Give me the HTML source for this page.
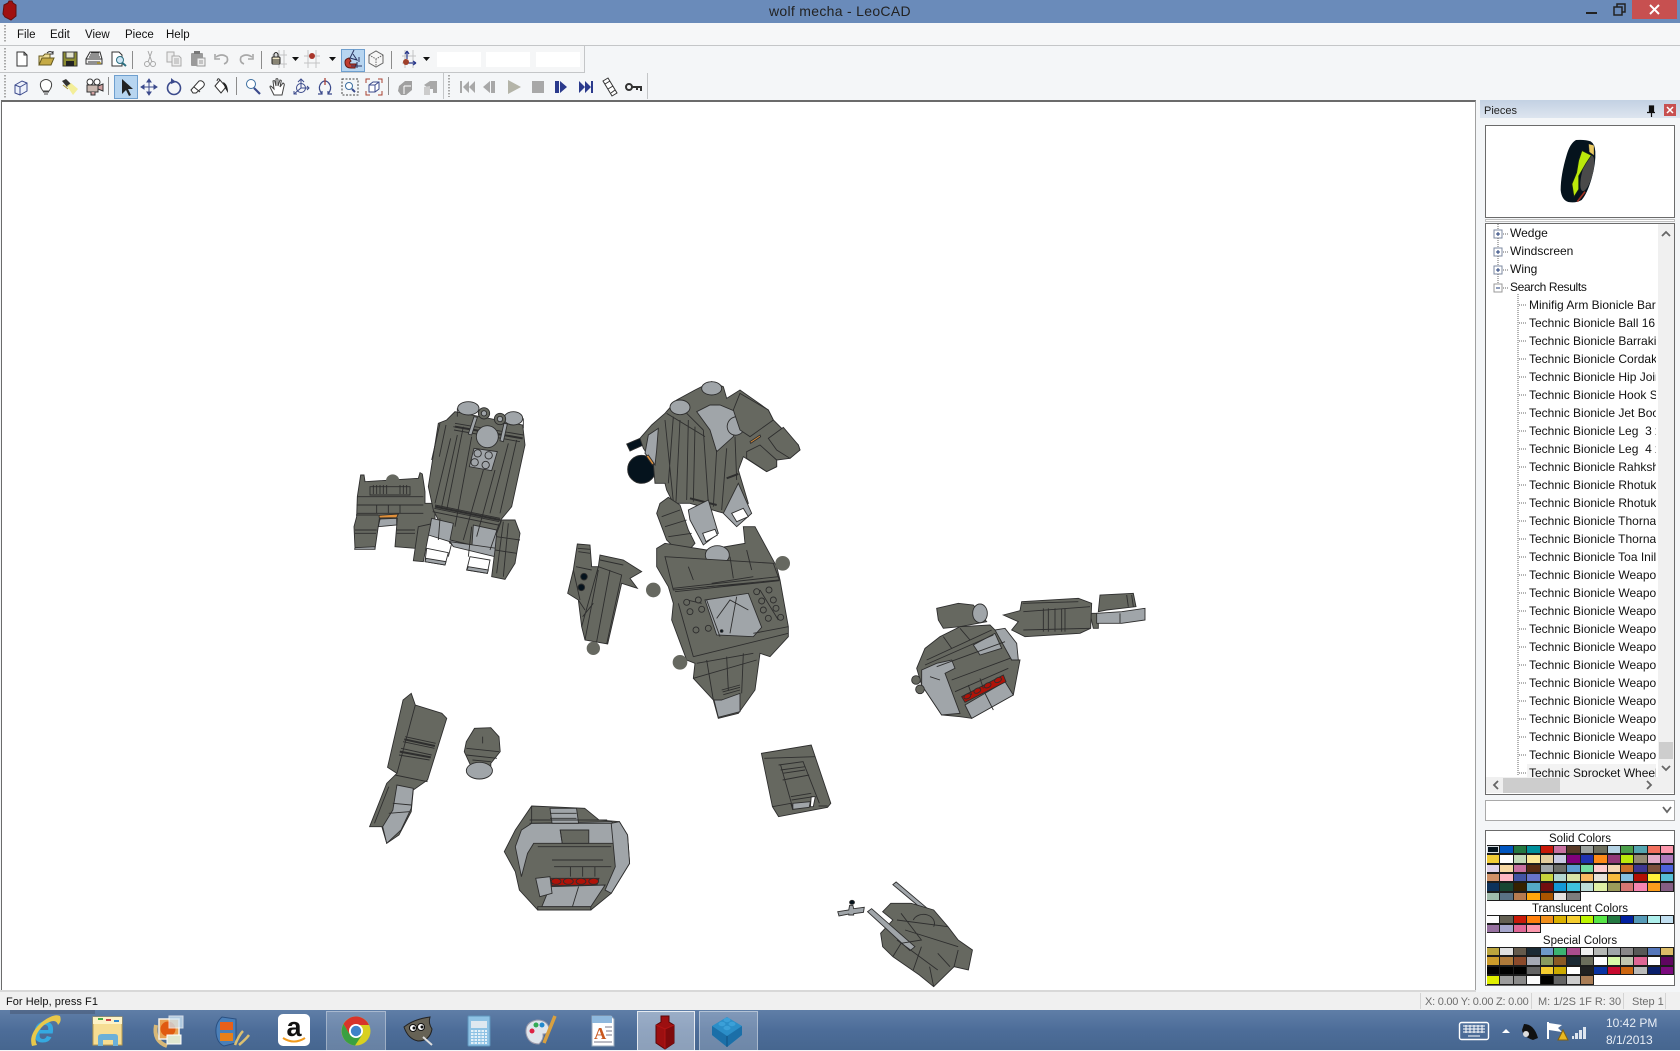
<!DOCTYPE html>
<html><head><meta charset="utf-8"><title>wolf mecha - LeoCAD</title>
<style>
html,body{margin:0;padding:0;width:1680px;height:1050px;overflow:hidden;background:#f4f6f8;font-family:"Liberation Sans",sans-serif;font-size:12px;color:#111}
.a{position:absolute}
.t{position:absolute;white-space:nowrap;line-height:16px}
svg{position:absolute;left:0;top:0;overflow:visible}
.sw{position:absolute;left:1487px;width:188px;display:grid;grid-template-columns:repeat(14,13.4px)}
.sw i{display:block;box-sizing:border-box;border-right:1px solid #1c1c1c;border-bottom:1px solid #1c1c1c;border-top:1px solid #1c1c1c}
.r .d,.r .l,.r .k,.r .w,.r .o,.r .e,.r path{vector-effect:non-scaling-stroke;stroke:#2e2e2e;stroke-width:.9}
.r .d{fill:#666860}.r .l{fill:#a0a5a9}.r .k{fill:#05131d}.r .w{fill:#fff}.r .o{fill:#e0903a}.r .e{fill:#b01208}
.r path{fill:none}
.r .s{fill:#666860;stroke:none}
.r .h{stroke-width:2}
.tr{position:absolute;left:1529px;width:127px;height:18px;line-height:18px;overflow:hidden;white-space:nowrap}
.m{font-size:11.5px}
.ct{position:absolute;left:1475px;width:210px;text-align:center;line-height:14px;font-size:11.5px;white-space:nowrap}
</style></head><body>
<div class="a" style="left:0;top:0;width:1680px;height:23px;background:#6a8bba"></div>
<div class="a" style="left:1632px;top:0;width:45px;height:19px;background:#c75050"></div>
<div class="t" style="left:769px;top:3px;font-size:14px;letter-spacing:.3px;color:#222;line-height:17px">wolf mecha - LeoCAD</div>
<div class="a" style="left:0;top:23px;width:1680px;height:22px;background:#f6f7f8;border-bottom:1px solid #c4c6c8"></div>
<div class="t m" style="left:17px;top:27px">File</div>
<div class="t m" style="left:50px;top:27px">Edit</div>
<div class="t m" style="left:85px;top:27px">View</div>
<div class="t m" style="left:125px;top:27px">Piece</div>
<div class="t m" style="left:166px;top:27px">Help</div>
<div class="a" style="left:0;top:46px;width:584px;height:26px;background:#f5f6f7;border-right:1px solid #c4c6c8;border-bottom:1px solid #c4c6c8"></div>
<div class="a" style="left:437px;top:52px;width:44px;height:15px;background:#fff"></div>
<div class="a" style="left:486px;top:52px;width:44px;height:15px;background:#fff"></div>
<div class="a" style="left:536px;top:52px;width:44px;height:15px;background:#fff"></div>
<div class="a" style="left:443px;top:73px;width:1px;height:26px;background:#c4c6c8"></div>
<div class="a" style="left:647px;top:73px;width:1px;height:26px;background:#c4c6c8"></div>
<div class="a" style="left:341px;top:49px;width:22px;height:21px;background:#b7d5f0;border:1px solid #6e9fcf"></div>
<div class="a" style="left:114px;top:75px;width:22px;height:22px;background:#b7d5f0;border:1px solid #6e9fcf"></div>
<!-- canvas -->
<div class="a" style="left:1px;top:100px;width:1473px;height:889px;background:#fff;border-top:2px solid #6b6b6b;border-left:1px solid #6b6b6b;border-right:1px solid #a0a0a0;box-sizing:content-box"></div>
<div class="a" style="left:0;top:990px;width:1476px;height:2px;background:#d8d8d8"></div>
<!-- pieces panel -->
<div class="a" style="left:1480px;top:100px;width:200px;height:18px;background:linear-gradient(#c3d1e3,#dde5ef)"></div>
<div class="t" style="left:1484px;top:103px;color:#222;font-size:11px">Pieces</div>
<div class="a" style="left:1664px;top:104px;width:12px;height:12px;background:#c75050"></div>
<div class="a" style="left:1485px;top:125px;width:188px;height:91px;background:#fff;border:1px solid #6b6b6b"></div>
<div class="a" style="left:1485px;top:219px;width:188px;height:1px;border:1px solid #c0c0c0;background:#fff"></div>
<div class="a" style="left:1485px;top:223px;width:188px;height:570px;background:#fff;border:1px solid #6b6b6b;overflow:hidden"></div>
<div class="a" style="left:1658px;top:224px;width:16px;height:553px;background:#f0f0f0"></div>
<div class="a" style="left:1659px;top:742px;width:14px;height:17px;background:#cdcdcd"></div>
<div class="a" style="left:1486px;top:777px;width:188px;height:16px;background:#f0f0f0"></div>
<div class="a" style="left:1503px;top:778px;width:57px;height:15px;background:#cdcdcd"></div>
<div class="a" style="left:1485px;top:800px;width:188px;height:19px;background:#fff;border:1px solid #a9a9a9"></div>
<div class="a" style="left:1485px;top:830px;width:188px;height:154px;background:#fff;border:1px solid #6b6b6b"></div>
<div class="t" style="left:1510px;top:225px">Wedge</div>
<div class="t" style="left:1510px;top:243px">Windscreen</div>
<div class="t" style="left:1510px;top:261px">Wing</div>
<div class="t" style="left:1510px;top:279px;letter-spacing:-.35px">Search Results</div>
<div class="a" style="left:1527px;top:764px;width:129px;height:13px;background:#f3f3f3"></div>
<div class="a" style="left:1486px;top:224px;width:172px;height:553px;overflow:hidden">
<div style="position:absolute;left:-1486px;top:-224px;width:1680px;height:1050px">
<div class="tr" style="top:296px">Minifig Arm Bionicle Bar</div>
<div class="tr" style="top:314px">Technic Bionicle Ball 16.</div>
<div class="tr" style="top:332px">Technic Bionicle Barraki</div>
<div class="tr" style="top:350px">Technic Bionicle Cordak</div>
<div class="tr" style="top:368px">Technic Bionicle Hip Joint</div>
<div class="tr" style="top:386px">Technic Bionicle Hook S</div>
<div class="tr" style="top:404px">Technic Bionicle Jet Boo</div>
<div class="tr" style="top:422px">Technic Bionicle Leg&nbsp; 3 x</div>
<div class="tr" style="top:440px">Technic Bionicle Leg&nbsp; 4 x</div>
<div class="tr" style="top:458px">Technic Bionicle Rahksh</div>
<div class="tr" style="top:476px">Technic Bionicle Rhotuk</div>
<div class="tr" style="top:494px">Technic Bionicle Rhotuk</div>
<div class="tr" style="top:512px">Technic Bionicle Thorna</div>
<div class="tr" style="top:530px">Technic Bionicle Thorna</div>
<div class="tr" style="top:548px">Technic Bionicle Toa Inil</div>
<div class="tr" style="top:566px">Technic Bionicle Weapo</div>
<div class="tr" style="top:584px">Technic Bionicle Weapo</div>
<div class="tr" style="top:602px">Technic Bionicle Weapo</div>
<div class="tr" style="top:620px">Technic Bionicle Weapo</div>
<div class="tr" style="top:638px">Technic Bionicle Weapo</div>
<div class="tr" style="top:656px">Technic Bionicle Weapo</div>
<div class="tr" style="top:674px">Technic Bionicle Weapo</div>
<div class="tr" style="top:692px">Technic Bionicle Weapo</div>
<div class="tr" style="top:710px">Technic Bionicle Weapo</div>
<div class="tr" style="top:728px">Technic Bionicle Weapo</div>
<div class="tr" style="top:746px">Technic Bionicle Weapo</div>
<div class="tr" style="top:764px">Technic Sprocket Wheel</div>
</div></div>
<div class="ct" style="top:832px">Solid Colors</div>
<div class="ct" style="top:902px">Translucent Colors</div>
<div class="ct" style="top:934px">Special Colors</div>
<div class="sw" style="top:845px;grid-auto-rows:9.33px">
<i style="background:#05131d;box-shadow:inset 0 0 0 1px #d8e0e6"></i><i style="background:#0055bf"></i><i style="background:#237841"></i><i style="background:#008f9b"></i><i style="background:#c91a09"></i><i style="background:#c870a0"></i><i style="background:#583927"></i><i style="background:#9ba19d"></i><i style="background:#6d6e5c"></i><i style="background:#b4d2e3"></i><i style="background:#4b9f4a"></i><i style="background:#55a5af"></i><i style="background:#f2705e"></i><i style="background:#fc97ac"></i>
<i style="background:#f2cd37"></i><i style="background:#fff"></i><i style="background:#c2dab8"></i><i style="background:#fbe696"></i><i style="background:#e4cd9e"></i><i style="background:#c9cae2"></i><i style="background:#81007b"></i><i style="background:#2032b0"></i><i style="background:#fe8a18"></i><i style="background:#923978"></i><i style="background:#bbe90b"></i><i style="background:#958a73"></i><i style="background:#e4adc8"></i><i style="background:#ac78ba"></i>
<i style="background:#e1d5ed"></i><i style="background:#f6d7a3"></i><i style="background:#c870a0"></i><i style="background:#582a12"></i><i style="background:#a0a5a9"></i><i style="background:#6c6e68"></i><i style="background:#5c9dd1"></i><i style="background:#73dca1"></i><i style="background:#fecccf"></i><i style="background:#f6d7b3"></i><i style="background:#cc702a"></i><i style="background:#3f3691"></i><i style="background:#7c503a"></i><i style="background:#4c61db"></i>
<i style="background:#d09168"></i><i style="background:#feb6c2"></i><i style="background:#4354a3"></i><i style="background:#6874ca"></i><i style="background:#c7d23c"></i><i style="background:#b3d7d1"></i><i style="background:#d9e4a7"></i><i style="background:#f9ba61"></i><i style="background:#e6e3da"></i><i style="background:#f8bb3d"></i><i style="background:#86c1e1"></i><i style="background:#b31004"></i><i style="background:#fff03a"></i><i style="background:#56bed6"></i>
<i style="background:#0d325b"></i><i style="background:#184632"></i><i style="background:#352100"></i><i style="background:#54a9c8"></i><i style="background:#720e0f"></i><i style="background:#1498d7"></i><i style="background:#3ec2dd"></i><i style="background:#bddcd8"></i><i style="background:#dfeea5"></i><i style="background:#9b9a5a"></i><i style="background:#d67572"></i><i style="background:#f785b1"></i><i style="background:#fa9c1c"></i><i style="background:#845e84"></i>
<i style="background:#a0bcac"></i><i style="background:#597184"></i><i style="background:#b67b50"></i><i style="background:#ffa70b"></i><i style="background:#a95500"></i><i style="background:#e6e3e0"></i><i style="background:#7d7d7d"></i>
</div>
<div class="sw" style="top:915px;grid-auto-rows:9.2px">
<i style="background:#fcfcfc"></i><i style="background:#635f52"></i><i style="background:#c91a09"></i><i style="background:#ff800d"></i><i style="background:#f08f1c"></i><i style="background:#dab000"></i><i style="background:#f5cd2f"></i><i style="background:#bdf400"></i><i style="background:#56e646"></i><i style="background:#237841"></i><i style="background:#0020a0"></i><i style="background:#559ab7"></i><i style="background:#aeefec"></i><i style="background:#c1dff0"></i>
<i style="background:#96709f"></i><i style="background:#a5a5cb"></i><i style="background:#df6695"></i><i style="background:#fc97ac"></i>
</div>
<div class="sw" style="top:946.5px;grid-auto-rows:9.55px">
<i style="background:#bba53d"></i><i style="background:#e0e0e0"></i><i style="background:#645a4c"></i><i style="background:#1b2a34"></i><i style="background:#6e99c9"></i><i style="background:#3cb371"></i><i style="background:#aa4d8e"></i><i style="background:#f0f0f0"></i><i style="background:#b5b8b5"></i><i style="background:#a0a5a9"></i><i style="background:#898788"></i><i style="background:#575857"></i><i style="background:#5677ba"></i><i style="background:#dcbc68"></i>
<i style="background:#cc9c2b"></i><i style="background:#ae7a3a"></i><i style="background:#8b4a2b"></i><i style="background:#a5a9b4"></i><i style="background:#899b5f"></i><i style="background:#8a5a25"></i><i style="background:#1b2a34"></i><i style="background:#6c6e5c"></i><i style="background:#fff"></i><i style="background:#d9f9a8"></i><i style="background:#c0c7b0"></i><i style="background:#df6695"></i><i style="background:#fff"></i><i style="background:#5f0560"></i>
<i style="background:#000"></i><i style="background:#000"></i><i style="background:#000"></i><i style="background:#646464"></i><i style="background:#f5cd2f"></i><i style="background:#ccaa00"></i><i style="background:#fff"></i><i style="background:#212121"></i><i style="background:#0a34a3"></i><i style="background:#c70a2e"></i><i style="background:#cc6611"></i><i style="background:#bbb"></i><i style="background:#0a1f6b"></i><i style="background:#7a0a7d"></i>
<i style="background:#dfee00"></i><i style="background:#9c9c9c"></i><i style="background:#8a8a8a"></i><i style="background:#fbfbfb"></i><i style="background:#000"></i><i style="background:#646464"></i><i style="background:#ccc"></i><i style="background:#aa7d55"></i>
</div>
<!-- status -->
<div class="a" style="left:0;top:992px;width:1680px;height:18px;background:#f0f0f0"></div>
<div class="t" style="left:6px;top:994px;font-size:11px;letter-spacing:.05px">For Help, press F1</div>
<div class="t" style="left:1425px;top:994px;color:#6d6d6d;font-size:11px;letter-spacing:-.25px">X: 0.00 Y: 0.00 Z: 0.00</div>
<div class="t" style="left:1538px;top:994px;color:#6d6d6d;font-size:11px">M: 1/2S 1F R: 30</div>
<div class="t" style="left:1632px;top:994px;color:#6d6d6d;font-size:11px">Step 1</div>
<div class="a" style="left:1420px;top:993px;width:1px;height:16px;background:#d4d4d4"></div>
<div class="a" style="left:1531px;top:993px;width:1px;height:16px;background:#d4d4d4"></div>
<div class="a" style="left:1623px;top:993px;width:1px;height:16px;background:#d4d4d4"></div>
<div class="a" style="left:1665px;top:993px;width:1px;height:16px;background:#d4d4d4"></div>
<!-- taskbar -->
<div class="a" style="left:0;top:1010px;width:1680px;height:40px;background:linear-gradient(#5f7ea7,#4d6d99 50%,#46668f)"></div>
<div class="a" style="left:10px;top:1010px;width:85px;height:4px;background:rgba(60,70,90,.35)"></div>
<div class="a" style="left:326px;top:1011px;width:58px;height:38px;background:rgba(255,255,255,.18);border:1px solid rgba(255,255,255,.35)"></div>
<div class="a" style="left:637px;top:1011px;width:56px;height:38px;background:rgba(255,255,255,.38);border:1px solid rgba(255,255,255,.75)"></div>
<div class="a" style="left:699px;top:1011px;width:57px;height:38px;background:rgba(255,255,255,.22);border:1px solid rgba(255,255,255,.4)"></div>
<div class="t" style="left:1606px;top:1015px;color:#e8eef6">10:42 PM</div>
<div class="t" style="left:1606px;top:1032px;color:#e8eef6">8/1/2013</div>

<svg width="1680" height="1050" viewBox="0 0 1680 1050">
<!-- app icon & window buttons -->
<path d="M4,5L8,3L9,1L12,1L13,3L16,5V16L11,20L5,17L3,14Z" fill="#a01010" stroke="#601010"/>
<path d="M1586,13h11" stroke="#222" stroke-width="2"/>
<path d="M1614,7h8v8h-8zM1617,7V4h8v8h-3" fill="none" stroke="#222" stroke-width="1.5"/>
<path d="M1650,5l9,9m0,-9l-9,9" stroke="#fff" stroke-width="2"/>
<path d="M1649.5,106h4v6h-4zM1647,112.5h8M1651.5,113v4" stroke="#111" stroke-width="1.2" fill="#111"/>
<path d="M1667,107l6,6m0,-6l-6,6" stroke="#fff" stroke-width="1.5"/>
<!-- grips -->
<path d="M5,25v18M5,48v22M5,75v23M449,75v22" stroke="#a9a9a9" stroke-width="2" stroke-dasharray="1.5 1.5"/>
<!-- separators -->
<path d="M132.5,51v18M261.5,51v18M391.5,51v18M108.5,77v18M236.5,77v18M388.5,77v18" stroke="#8c8c8c"/>

<!-- row 1 icons -->
<g transform="translate(22,59)"><path d="M-5,-7H2L5,-4V7H-5ZM2,-7V-4H5" fill="#fff" stroke="#333"/></g>
<g transform="translate(46,59)"><path d="M-7,6V-3H-3L-1,-5H4V-1" fill="#eddc95" stroke="#665a20"/><path d="M-7,6L-4,-1H8L5,6Z" fill="#c5aa45" stroke="#665a20"/><path d="M1,-6Q4,-9 7,-6M7,-8V-5H4" fill="none" stroke="#333"/></g>
<g transform="translate(70,59)"><rect x="-7" y="-7" width="14" height="14" fill="#8c8c30" stroke="#333"/><rect x="-4" y="-7" width="8" height="6" fill="#e4e4d0" stroke="#444"/><rect x="-4" y="2" width="8" height="5" fill="#222"/></g>
<g transform="translate(94,59)"><path d="M-8,0L-4,-7H6L8,0V5H-8Z" fill="#eee" stroke="#333"/><path d="M-8,0H8M-6,3H6M-4,-4H5M-5,-2H6M-3,-6H5" stroke="#333" fill="none"/><path d="M3,4H7" stroke="#c8b040" stroke-width="1.5"/></g>
<g transform="translate(118,59)"><path d="M-6,-7H1L4,-4V7H-6Z" fill="#fff" stroke="#333"/><circle cx="2" cy="1" r="3.5" fill="#cfe6f5" stroke="#2b6f80"/><path d="M4.5,4L8,7" stroke="#2b6f80" stroke-width="2"/></g>
<g transform="translate(150,59)" stroke="#a8a8a8" fill="none"><circle cx="-3" cy="5" r="2.5"/><circle cx="3" cy="5" r="2.5"/><path d="M-2,3L2,-8M2,3L-2,-8"/></g>
<g transform="translate(174,59)"><path d="M-7,-7H0V3H-7Z" fill="#eee" stroke="#aaa"/><path d="M-2,-3H5L7,-1V7H-2Z" fill="#eee" stroke="#aaa"/><path d="M0,0H5M0,2H5M0,4H5" stroke="#aaa"/></g>
<g transform="translate(198,59)"><rect x="-7" y="-6" width="12" height="13" rx="1" fill="#9a9a9a"/><rect x="-4" y="-8" width="6" height="3" fill="#777"/><path d="M-1,-1H7V7H-1Z" fill="#eee" stroke="#999"/><path d="M1,2H5M1,4H5" stroke="#999"/></g>
<g transform="translate(222,59)" fill="none" stroke="#a8a8a8" stroke-width="1.6"><path d="M-6,-2Q0,-6 5,-2Q7,3 2,5"/><path d="M-7,-5V0H-2"/></g>
<g transform="translate(246,59)" fill="none" stroke="#a8a8a8" stroke-width="1.6"><path d="M6,-2Q0,-6 -5,-2Q-7,3 -2,5"/><path d="M7,-5V0H2"/></g>
<g transform="translate(276,59)"><path d="M-4,-4H11M-4,5H11M3,-9V9M8,-9V9" stroke="#c4c4c4" fill="none"/><rect x="-4" y="-2" width="8" height="7" rx="1" fill="#f0e8c8" stroke="#222"/><path d="M-2,-2V-5Q0,-8 2,-5V-2M-4,1H4M-4,3H4" fill="none" stroke="#222"/></g>
<path d="M292,57h7l-3.5,4zM329,57h7l-3.5,4zM423,57h7l-3.5,4z" fill="#111"/>
<g transform="translate(312,59)"><path d="M-8,-3H8M-8,4H8M-4,-9V9M4,-9V9" stroke="#c4c4c4" fill="none"/><circle cx="0" cy="-3" r="3" fill="#a8352a"/></g>
<g transform="translate(353,59)"><path d="M-8,3Q-8,9 -2,9L2,9L3,5H-3Q-4,3 -2,2L-4,-1Q-8,0 -8,3Z" fill="#c03c30" stroke="#601a14"/><path d="M1,-9L-3,-1L4,1L0,-5M-2,7H9M4,3V9M6,-2V3" fill="none" stroke="#2b3460"/></g>
<g transform="translate(376,59)" fill="#f6f6f6" stroke="#666"><path d="M-7,-4L0,-8L7,-4V4L0,8L-7,4Z"/><path d="M-7,-4L0,0L7,-4M0,0V8" stroke-dasharray="1.5 1" fill="none"/></g>
<g transform="translate(408,59)"><path d="M-6,-3H8M-6,4H8M-3,-9V9M5,-9V9" stroke="#c4c4c4" fill="none"/><path d="M-1,-8V0M-1,-8l-2,3m2,-3l2,3M0,4H8M8,4l-3,-2m3,2l-3,2" stroke="#2b3a8c" fill="none" stroke-width="1.2"/><circle cx="-2" cy="3" r="3" fill="#a0402a"/></g>

<!-- row 2 icons -->
<g transform="translate(21,87)" fill="#eef2fb" stroke="#3b4a8c"><path d="M-6,-2L1,-6L6,-4V4L-1,8L-6,6Z"/><path d="M-6,-2L-1,0L6,-4M-1,0V8" fill="none"/></g>
<g transform="translate(46,87)"><path d="M-3,4Q-7,-1 -5,-5Q0,-10 5,-5Q7,-1 3,4Z" fill="#fff" stroke="#444"/><path d="M-3,5H3M-2,7H2" stroke="#444"/></g>
<g transform="translate(70,87)"><path d="M-8,-6L-4,-8L1,-3L-3,0Z" fill="#333"/><path d="M-3,-1L1,-4L8,2L3,8Z" fill="#f2ec88" opacity=".85"/><path d="M-7,-2L-2,2" stroke="#a89530" fill="none"/></g>
<g transform="translate(94,87)"><circle cx="-4" cy="-5" r="3" fill="#fff" stroke="#333"/><circle cx="3" cy="-5" r="3" fill="#fff" stroke="#333"/><rect x="-7" y="-2" width="11" height="7" fill="#c9b8b0" stroke="#333"/><path d="M4,-1L9,-3V4L4,2ZM-3,5V8H1V5" fill="#d0a0a0" stroke="#333"/></g>
<path d="M122,79V94L126,90L129,96L131,95L128,89H133Z" fill="#222"/>
<g transform="translate(149,87)" stroke="#3b4a8c" fill="#3b4a8c"><path d="M-7,0H7M0,-7V7" fill="none"/><path d="M-8,0l3,-2v4zM8,0l-3,-2v4zM0,-8l-2,3h4zM0,8l-2,-3h4z"/></g>
<g transform="translate(174,87)" fill="none" stroke="#3b4a8c" stroke-width="1.6"><circle cx="0" cy="1" r="6.5"/><path d="M-3,-9L2,-5L-3,-3" fill="#3b4a8c" stroke="none"/></g>
<g transform="translate(198,87)"><path d="M-7,3L1,-6Q4,-7 6,-4Q7,-2 5,0L-2,6H-5Z" fill="#fff" stroke="#333"/><path d="M-4,0L2,5" stroke="#333"/></g>
<g transform="translate(221,87)"><path d="M-6,-1L-1,-7L5,0L0,6Z" fill="#fff" stroke="#333"/><path d="M-1,-7Q-3,-10 -4,-6" fill="none" stroke="#333"/><path d="M2,-5Q7,-3 7,6L4,1Z" fill="#222"/></g>
<g transform="translate(253,87)"><circle cx="-2" cy="-3" r="4.5" fill="#fff" stroke="#3b6ea0"/><path d="M1,1L7,7" stroke="#3b4a8c" stroke-width="2.2"/></g>
<g transform="translate(278,87)" fill="#fff" stroke="#444"><path d="M-4,8L-8,0Q-8,-2 -6,0L-4,2L-5,-6Q-3,-7 -3,-5L-2,-1L-2,-8Q0,-9 0,-7V-1L2,-7Q4,-7 3,-5L2,0L5,-4Q7,-3 6,-1L4,8Z"/></g>
<g transform="translate(301,87)" fill="none" stroke="#3b4a8c"><circle cx="0" cy="1" r="4.5"/><path d="M0,-8V1L8,1M0,1L-7,7M-3,-5L0,-8L3,-5M6,-1L8,1L6,3M-7,4V7H-4"/></g>
<g transform="translate(325,87)" fill="none" stroke="#3b4a8c" stroke-width="1.2"><path d="M-3,7Q-7,2 -5,-2Q-3,-6 0,-6Q3,-6 5,-2Q7,2 3,7"/><path d="M-7,7H-3V4M7,7H3V4"/><path d="M0,-9V-2" stroke="#a8352a"/></g>
<g transform="translate(350,87)"><rect x="-8" y="-8" width="16" height="16" fill="none" stroke="#444" stroke-dasharray="2 1.5"/><circle cx="-1" cy="-1" r="3.5" fill="#fff" stroke="#3b6ea0"/><path d="M2,2L5,5" stroke="#3b4a8c" stroke-width="2"/></g>
<g transform="translate(374,87)"><path d="M-8,-4V-8H-4M4,-8H8V-4M8,4V8H4M-4,8H-8V4" stroke="#a84030" fill="none"/><path d="M-5,-2L-1,-5H5V2L1,5H-5ZM-5,-2H1V5M1,-2L5,-5" fill="#fff" stroke="#3b4a8c"/></g>
<g transform="translate(405,87)" fill="#a0a0a0"><path d="M-6,-1L0,-6H7V3L1,8H-4L-7,4Z"/><path d="M-1,-1H6M-1,-1V7" stroke="#fff" fill="none"/></g>
<g transform="translate(430,87)" fill="#a8a8a8"><path d="M-6,-2L0,-6H7V6H3V2H0V0H-3Z"/><path d="M0,-1V8H-6V0Z" fill="#ccc"/></g>
<g fill="#a8a8a8"><path d="M460,81h2v12h-2zM469,81v12l-6,-6zM475,81v12l-6,-6z"/><path d="M490,81v12l-7,-6zM491,81h4v12h-4z"/><path d="M508,80l13,7l-13,7z" fill="#b4b4a8"/><rect x="532" y="81" width="12" height="12"/></g>
<g fill="#2b3a8c"><path d="M555,81h4v12h-4zM560,81l7,6l-7,6z"/><path d="M579,81l6,6l-6,6zM585,81l6,6l-6,6zM591,81h2v12h-2z"/></g>
<g transform="translate(610,87)" fill="#fff" stroke="#333"><path d="M-7,-6L-2,-9L7,6L2,9Z"/><path d="M-5,-3L0,-6M-2,2L3,-1M1,6L5,3" fill="none"/></g>
<g transform="translate(634,87)"><circle cx="-5" cy="0" r="3" fill="none" stroke="#333" stroke-width="2"/><path d="M-2,-1H8V4H6V1H4V3H2V1H-2Z" fill="#333"/></g>

<!-- tree -->
<g fill="#fff" stroke="#7c8aa0"><rect x="1494" y="230" width="8" height="8"/><rect x="1494" y="248" width="8" height="8"/><rect x="1494" y="266" width="8" height="8"/><rect x="1494" y="284" width="8" height="8" stroke="#999"/></g>
<path d="M1496,234h4M1498,232v4M1496,252h4M1498,250v4M1496,270h4M1498,268v4M1496,288h4" stroke="#223c78"/>
<path d="M1498,224v6M1498,238v10M1498,256v10M1498,274v10M1503,234h6M1503,252h6M1503,270h6M1503,288h6M1518,294V776M1519,305h8M1519,323h8M1519,341h8M1519,359h8M1519,377h8M1519,395h8M1519,413h8M1519,431h8M1519,449h8M1519,467h8M1519,485h8M1519,503h8M1519,521h8M1519,539h8M1519,557h8M1519,575h8M1519,593h8M1519,611h8M1519,629h8M1519,647h8M1519,665h8M1519,683h8M1519,701h8M1519,719h8M1519,737h8M1519,755h8M1519,773h8" stroke="#666" stroke-dasharray="1 1" fill="none"/>
<path d="M1662,236l4,-4l4,4M1662,766l4,4l4,-4M1498,781l-4,4l4,4M1647,781l4,4l-4,4M1663,807l4,5l4,-5" fill="none" stroke="#666" stroke-width="1.8"/>
<!-- preview wheel -->
<g transform="translate(1470,0) scale(.3333)">
<path d="M318,420Q345,418 362,424Q375,432 376,455Q378,490 365,535Q352,580 335,600Q318,610 295,606Q275,600 272,570Q272,525 290,465Q300,430 318,420Z" fill="#05131d"/>
<ellipse cx="352" cy="520" rx="16" ry="55" transform="rotate(15 352 520)" fill="#4a4a4a"/>
<path d="M336,452L364,466L348,490L326,528L326,568L312,590L306,552L320,518L326,482Z" fill="#bbe90b" stroke="#1c2b10" stroke-width="2"/>
<path d="M356,432L372,436L372,466L358,456Z" fill="#e8c860" stroke="#333"/>
<path d="M322,605L345,575" stroke="#a03020" stroke-width="5"/>
</g>

<!-- tray -->
<rect x="1459.5" y="1022.5" width="29" height="17" rx="2" fill="none" stroke="#fff" stroke-width="1.4"/>
<path d="M1463,1026h22M1463,1029h22M1463,1032h22M1468,1036h12M1466,1025v8M1470,1025v8M1474,1025v8M1478,1025v8M1482,1025v8" stroke="#fff"/>
<path d="M1502,1033l4,-4l4,4z" fill="#fff"/>
<path d="M1524,1024q10,0 14,14l-5,2q-10,-3 -11,-10z" fill="#111"/>
<circle cx="1526" cy="1034" r="3" fill="#ddd"/>
<path d="M1548,1022v17" stroke="#fff" stroke-width="2"/><path d="M1549,1023l13,2l-4,3l4,4l-13,-2z" fill="#fff"/>
<path d="M1558,1040l5,-10l5,10z" fill="#e8b820" stroke="#806010"/>
<path d="M1572,1036h2v3h-2zM1575,1033h3v6h-3zM1579,1030h3v9h-3zM1583,1027h3v12h-3z" fill="#dfe6ef"/>

<!-- task icons -->
<g transform="translate(46,1031)">
<text x="-13" y="11" font-family="Liberation Sans,sans-serif" font-size="38" font-style="italic" font-weight="bold" fill="#35a9e0">e</text>
<path d="M-14,15Q-18,3 -4,-9Q8,-18 14,-15Q16,-10 12,-6Q10,-14 -2,-6Q-14,5 -9,14Z" fill="#e8c84a"/>
</g>
<g transform="translate(108,1031)"><path d="M-15,-14H14V14H-15Z" fill="#f6dd93" stroke="#b89b50"/><rect x="-15" y="-14" width="29" height="7" fill="#fdf2c6"/><rect x="-10" y="-13" width="5" height="2" fill="#4a4"/><rect x="-2" y="-12" width="5" height="2" fill="#c44"/><rect x="6" y="-11" width="5" height="2" fill="#38c"/><path d="M-10,15V6Q-10,3 -6,3H7Q10,3 10,6V15H5V9H-5V15Z" fill="#6bb0d8"/></g>
<g transform="translate(169,1031)"><path d="M-13,-6Q-16,10 -2,15" stroke="#d8b878" stroke-width="4" fill="none"/><rect x="-10" y="-12" width="20" height="20" fill="#e8a050" stroke="#f4f0e8" stroke-width="1.5"/><circle cx="-1" cy="-2" r="7.5" fill="#e05a10"/><rect x="0" y="-15" width="14" height="12" fill="#cfe6f5" stroke="#fff" opacity=".75"/><rect x="-2" y="4" width="14" height="9" fill="#dfe7d0" stroke="#fff"/></g>
<g transform="translate(231,1031)"><path d="M-9,-14Q-16,-8 -15,2Q-14,12 -7,15L5,12V-12Z" fill="#4a7fb8" stroke="#2a4f80"/><rect x="-11" y="-9" width="13" height="8" fill="#e8601a"/><rect x="-11" y="2" width="13" height="8" fill="#e8801a"/><path d="M4,14Q8,4 12,0M8,14Q15,8 18,4" stroke="#dcc070" stroke-width="2.5" fill="none"/></g>
<rect x="278" y="1014" width="32" height="32" rx="5" fill="#fff"/>
<text x="294" y="1036" text-anchor="middle" font-family="Liberation Sans,sans-serif" font-size="27" font-weight="bold" fill="#111">a</text>
<path d="M283,1038Q294,1045 305,1038" stroke="#f09a1c" stroke-width="2" fill="none"/>
<g transform="translate(356,1031)"><circle r="14.5" fill="#d8d020"/><path d="M0,-14.5A14.5,14.5 0 0 0 -12.5,-7L-6,4L0,-6H13A14.5,14.5 0 0 0 0,-14.5Z" fill="#d8342a"/><path d="M-12.5,-7A14.5,14.5 0 0 0 -1,14.5L6,4L-6,4Z" fill="#3aa040"/><circle r="7" fill="#fff"/><circle r="5.2" fill="#3f82c8"/></g>
<g transform="translate(418,1031)"><path d="M-14,-4Q-4,-12 12,-14Q10,-8 14,-2Q12,10 0,10Q-10,8 -14,-4Z" fill="#666255" stroke="#222"/><circle cx="-5" cy="-3" r="3.5" fill="#fff" stroke="#111"/><circle cx="3" cy="-4" r="3.5" fill="#fff" stroke="#111"/><circle cx="-4" cy="-3" r="1.5" fill="#111"/><circle cx="4" cy="-4" r="1.5" fill="#111"/><path d="M5,6L14,14" stroke="#ddd" stroke-width="2"/></g>
<g transform="translate(479,1031)"><rect x="-11" y="-15" width="22" height="30" rx="1" fill="#8ec2e4" stroke="#5e94bb"/><rect x="-8" y="-10" width="16" height="7" fill="#dfe8f0"/><path d="M-8,0H8M-8,3H8M-8,6H8M-8,9H8M-8,12H8" stroke="#fff" stroke-width="1.6" stroke-dasharray="2.5 1"/></g>
<g transform="translate(541,1031)"><path d="M-4,-11Q-16,-9 -15,2Q-13,13 -2,13Q3,8 2,3Q8,3 8,-3Q6,-11 -4,-11Z" fill="#dfe5ec" stroke="#99a"/><circle cx="-9" cy="0" r="2.5" fill="#d24"/><circle cx="-5" cy="-6" r="2.5" fill="#3a5"/><circle cx="1" cy="-6" r="2.5" fill="#28c"/><path d="M3,12L14,-15" stroke="#d8a040" stroke-width="3.5"/></g>
<g transform="translate(603,1031)"><path d="M-11,-15H8L11,-12V15H-11Z" fill="#fff" stroke="#9ab"/><rect x="-11" y="-15" width="20" height="7" fill="#8eb8dd"/><text x="-9" y="8" font-family="Liberation Serif,serif" font-size="17" font-weight="bold" fill="#c9571e">A</text><path d="M2,-4H9M3,0H9M3,4H9M-9,11H9" stroke="#778"/></g>
<g transform="translate(665,1031)"><path d="M-9,-6L-4,-9V-15H4V-9L9,-6V12L0,18L-9,12Z" fill="#9c0f10" stroke="#5a0607"/><path d="M0,-2L9,-6V12L0,18Z" fill="#7e0a0c"/><path d="M-9,-6L0,-2L9,-6M0,-2V18" stroke="#b31414" fill="none"/></g>
<g transform="translate(727,1031)"><path d="M-15,-5L0,-14L15,-5V4L0,16L-15,4Z" fill="#2b8ec8"/><path d="M-15,-5L0,5L15,-5V4L0,16L-15,4Z" fill="#1b6fa8"/><path d="M0,5V16" stroke="#125080"/><ellipse cx="-5" cy="-7" rx="3.5" ry="2.2" fill="#3ba0d8"/><ellipse cx="5" cy="-7" rx="3.5" ry="2.2" fill="#3ba0d8"/><ellipse cx="0" cy="-3" rx="3.5" ry="2.2" fill="#3ba0d8"/><ellipse cx="0" cy="-11" rx="3.5" ry="2.2" fill="#3ba0d8"/></g>

<!-- mech pieces (zoom-5 coordinates) -->
<g class="r" transform="translate(340,370) scale(.33333)">
 <!-- left hip -->
 <polygon class="d" points="62,315 72,315 75,335 235,325 240,308 247,312 255,365 255,400 285,400 285,470 250,480 225,535 165,530 172,445 118,447 105,537 45,535 42,470 50,440 52,380"/>
 <circle class="s" cx="158" cy="333" r="20"/>
 <polygon class="l" points="45,533 105,530 105,538 44,538"/>
 <polygon class="l" points="120,447 170,445 170,465 115,470"/>
 <polygon class="o" points="117,436 175,432 170,443 118,444"/>
 <path d="M52,380H250M50,405H250M48,435H115M45,480H110M170,480H225M90,350H210V375H90ZM110,405V430M145,405V430M180,405V430M100,345V372M110,345V372M120,345V372M130,345V372M140,345V372M180,345V372M190,345V372M200,345V372M45,490H108M170,490H225M50,430H250"/>
 <!-- torso A -->
 <polygon class="d" points="345,125 548,165 555,225 515,410 482,450 470,540 330,520 280,420 265,350 295,160 320,150"/>
 <polygon class="l" points="275,445 340,460 330,510 480,545 470,480 400,465 395,540 330,515 265,495"/>
 <polygon class="l" points="330,515 470,535 465,560 340,530"/>
 <polygon class="d" points="485,450 525,450 540,490 525,580 495,628 455,620 465,540 470,490"/>
 <polygon class="d" points="235,470 272,462 250,575 220,572"/>
 <polygon class="w" points="260,535 325,548 315,585 255,575"/>
 <polygon class="l" points="258,565 318,575 315,585 255,575"/>
 <polygon class="w" points="390,560 450,570 442,610 380,600"/>
 <polygon class="l" points="385,590 445,600 442,610 380,600"/>
 <path d="M332,205L285,400M370,170L320,420M395,200L345,470M430,300L370,510M465,300L410,500M505,220L450,430M530,210L480,430M300,160L275,270M318,165L298,260M352,195L305,410"/>
 <path d="M285,405L480,445M283,415L478,455M278,425L475,465M345,160L550,195M340,170L545,205M342,180L540,215M478,460L450,540M395,470L385,560"/>
 <path class="h" d="M285,410L480,450M345,170L548,205"/>
 <path d="M470,500L540,510M465,540L530,550M490,455L470,610M505,460L490,620M300,445L295,510M335,520L325,560"/>
 <ellipse class="l" cx="385" cy="115" rx="32" ry="20"/>
 <ellipse class="l" cx="520" cy="145" rx="28" ry="20"/>
 <path d="M352,115V140M550,145V175"/>
 <circle class="d" cx="432" cy="130" r="17"/><circle cx="432" cy="130" r="8" class="l"/>
 <circle class="d" cx="480" cy="147" r="17"/><circle cx="480" cy="147" r="8" class="l"/>
 <polygon class="l" points="402,140 412,142 395,195 385,192"/>
 <polygon class="l" points="492,160 502,162 490,215 480,212"/>
 <polygon class="l" points="402,235 472,245 455,302 388,290"/>
 <circle class="l" cx="442" cy="200" r="33"/>
 <circle class="l" cx="413" cy="250" r="11"/><circle class="l" cx="446" cy="256" r="11"/><circle class="l" cx="404" cy="277" r="11"/><circle class="l" cx="437" cy="285" r="11"/>

 <!-- gun C -->
 <polygon class="d" points="712,522 750,525 755,590 775,590 780,555 850,570 905,605 870,625 892,655 845,640 803,822 735,810 725,770 715,690 683,670 700,600"/>
 <circle class="s" cx="760" cy="835" r="20"/>
 <circle class="k" cx="732" cy="620" r="10"/><circle class="k" cx="724" cy="652" r="10"/>
 <path d="M715,545L750,550M713,535L750,538M708,590L755,600M780,570L850,585M775,590L845,615L800,822M775,600L735,810M810,600L770,815M700,600L720,690M725,770L775,590M715,690L735,720M728,740L760,700"/>

 <!-- top robot B -->
 <circle class="k" cx="905" cy="298" r="42"/>
 <polygon class="k" points="860,222 900,205 910,225 870,243"/>
 <polygon class="d" points="900,205 935,165 975,130 1010,90 1065,60 1115,35 1150,50 1160,85 1200,60 1285,120 1300,150 1375,225 1380,240 1350,265 1310,270 1310,290 1280,305 1210,260 1195,300 1225,400 1190,440 1135,425 1050,400 1000,400 980,360 975,340 945,340 940,280 910,235"/>
 <polygon class="l" points="1070,125 1110,105 1140,105 1200,130 1180,200 1130,245 1110,180"/>
 <polygon class="l" points="925,195 955,175 950,240 945,285 915,250"/>
 <polygon class="o" points="918,258 925,255 942,280 937,285"/>
 <polygon class="o" points="1230,215 1260,195 1262,200 1232,220"/>
 <ellipse class="l" cx="1115" cy="55" rx="30" ry="20"/>
 <ellipse class="l" cx="1020" cy="112" rx="30" ry="22"/>
 <ellipse class="l" cx="1188" cy="168" rx="26" ry="28" transform="rotate(25 1188 168)"/>
 <polygon class="d" points="1285,205 1330,172 1375,225 1380,240 1350,265 1310,240"/>
 <polygon class="d" points="1220,245 1260,225 1310,270 1310,290 1280,305 1220,265"/>
 <polygon class="d" points="1200,70 1285,120 1300,150 1230,200 1200,180 1180,120"/>
 <path d="M1000,140L985,340M1020,150L1008,395M1045,150L1040,390M1065,170L1060,395M1090,180L1105,400M1130,240L1120,410M1160,235L1145,420M980,130L1095,200M975,150L1000,395M1185,200L1190,330M1040,130L1090,180"/>
 <path class="h" d="M1050,385L1130,405M1160,325L1195,312"/>
 <polygon class="l" points="1045,420 1105,390 1135,490 1090,525 1050,450"/>
 <polygon class="w" points="1088,490 1125,478 1132,495 1098,515"/>
 <polygon class="l" points="1150,430 1195,340 1235,430 1190,470"/>
 <polygon class="w" points="1175,430 1210,415 1225,440 1190,455"/>
 <polygon class="d" points="960,400 985,382 1020,405 1045,480 1065,520 1030,560 980,510 950,430"/>
 <path d="M965,440L1020,420M975,470L1040,450M985,500L1055,490"/>

 <!-- main torso D -->
 <polygon class="d" points="950,535 975,520 1100,540 1215,520 1210,470 1245,470 1310,590 1320,630 1345,770 1345,800 1290,860 1260,850 1245,960 1195,1030 1135,1045 1120,990 1060,925 1065,880 1040,870 995,750 1000,700 985,650 950,590"/>
 <ellipse class="l" cx="1132" cy="555" rx="36" ry="28"/>
 <polygon class="d" points="975,560 1300,580 1318,630 1000,660"/>
 <polygon class="l" points="1095,690 1225,670 1265,772 1240,800 1130,795"/>
 <polygon class="l" points="1145,990 1200,970 1200,1025 1135,1042 1122,990"/>
 <circle class="s" cx="1328" cy="580" r="22"/><circle class="s" cx="940" cy="660" r="22"/><circle class="s" cx="1020" cy="877" r="22"/>
 <path d="M1000,655L1315,620M1005,665L1318,632M1040,690L1085,700M1100,650L1240,640M1060,860L1345,790M1070,880L1240,850M1045,590L1060,630M1170,560L1180,625M1220,540L1235,600M1015,700L1060,860M1240,790L1345,770M1060,925L1250,870M1100,870L1120,990M1160,860L1165,960M1210,850L1205,970M1145,960L1200,945M1148,966L1200,952M1150,974L1200,960M1140,800L1100,690M1130,745L1170,690L1225,720M1190,680L1170,790M1260,660L1315,750M1115,640L1240,620"/>
 <circle class="d" cx="1040" cy="697" r="9"/><circle class="d" cx="1075" cy="690" r="9"/><circle class="d" cx="1050" cy="725" r="9"/><circle class="d" cx="1085" cy="718" r="9"/><circle class="d" cx="1068" cy="780" r="9"/><circle class="d" cx="1105" cy="775" r="9"/>
 <circle class="d" cx="1250" cy="665" r="9"/><circle class="d" cx="1287" cy="660" r="9"/><circle class="d" cx="1265" cy="693" r="9"/><circle class="d" cx="1300" cy="690" r="9"/><circle class="d" cx="1270" cy="720" r="9"/><circle class="d" cx="1308" cy="715" r="9"/><circle class="d" cx="1285" cy="745" r="9"/><circle class="d" cx="1322" cy="742" r="9"/>
 <circle class="k" cx="1145" cy="783" r="4"/>
</g>

<!-- zoom-7 group -->
<g class="r" transform="translate(880,570) scale(.33333)">
 <polygon class="d" points="170,115 235,100 280,105 320,155 240,170 190,175 175,150"/>
 <ellipse class="l" cx="300" cy="130" rx="22" ry="28"/>
 <polygon class="d" points="135,235 180,200 240,170 330,165 350,185 395,270 420,270 400,375 275,445 240,440 185,435 125,345 110,295"/>
 <polygon class="l" points="125,300 170,280 215,270 225,295 195,310 240,430 185,435 125,345"/>
 <polygon class="l" points="280,225 345,190 365,235 300,255"/>
 <polygon class="l" points="255,405 375,335 400,375 275,445"/>
 <polygon class="l" points="345,180 375,175 410,220 415,270 395,270"/>
 <polygon class="e" points="245,380 370,315 378,335 255,397"/>
 <ellipse class="e" cx="262" cy="379" rx="11" ry="7" transform="rotate(-27 262 379)"/><ellipse class="e" cx="292" cy="362" rx="11" ry="7" transform="rotate(-27 292 362)"/><ellipse class="e" cx="323" cy="346" rx="11" ry="7" transform="rotate(-27 323 346)"/><ellipse class="e" cx="354" cy="330" rx="11" ry="7" transform="rotate(-27 354 330)"/>
 <path d="M140,270L335,180M135,285L340,195M170,290L375,215M215,330L390,265M225,365L385,295M315,370L340,420M190,200L215,235M240,175L270,210M150,320L180,330M265,345L275,375M300,325L310,355"/>
 <polygon class="d" points="630,130 655,130 655,175 640,175"/>
 <polygon class="d" points="370,135 420,122 425,95 595,85 635,100 632,175 600,190 435,200 395,180 415,155"/>
 <polygon class="l" points="650,130 725,125 795,115 795,150 725,160 650,160"/>
 <polygon class="d" points="655,125 660,75 760,70 768,110 680,120"/>
 <path d="M430,125L630,110M430,180L630,175M490,115V185M505,115V185M525,115V185M545,115V185M555,115V185M740,75L745,110M755,75L760,110M428,100L595,95M720,130V160"/>
 <circle class="d" cx="108" cy="330" r="13"/><circle class="d" cx="120" cy="358" r="13"/>
</g>

<!-- zoom-6 group (x 2.45 / y 3) -->
<g class="r" transform="translate(350,680) scale(.40816,.33333)">
 <polygon class="d" points="150,40 160,75 225,100 237,115 190,300 155,330 150,395 120,465 90,490 78,440 48,440 90,310 115,280 92,262 130,60"/>
 <polygon class="l" points="115,315 155,325 150,385 125,450 90,490 80,440 105,390"/>
 <path d="M135,170L210,190M130,185L207,205M125,205L200,225M120,225L195,240M110,285L190,305M160,75L115,280M60,430L95,320M95,400L145,395M105,370L150,375"/>
 <path class="h" d="M133,178L208,198M122,215L198,232"/>
 <polygon class="d" points="305,145 345,143 365,170 368,215 345,250 345,265 295,255 280,215 285,185"/>
 <ellipse class="l" cx="317" cy="272" rx="32" ry="25"/>
 <path d="M285,205L365,215M285,225L360,235M300,240L345,245M325,170V190"/>
 <polygon class="d" points="445,378 575,385 610,420 660,425 680,465 685,550 640,640 590,690 460,690 415,630 405,575 378,515 405,450"/>
 <polygon class="l" points="445,430 640,425 670,450 645,490 450,490 435,520 420,590 405,500 420,450"/>
 <polygon class="d" points="515,450 585,450 585,490 520,490"/>
 <polygon class="l" points="640,430 660,425 680,465 685,550 640,640 625,630 650,560"/>
 <polygon class="l" points="490,385 555,385 560,430 495,430"/>
 <polygon class="l" points="490,620 625,615 590,680 470,680"/>
 <polygon class="d" points="460,680 590,680 590,690 460,690"/>
 <polygon class="e" points="490,595 610,595 605,615 495,617"/>
 <ellipse class="e" cx="505" cy="604" rx="12" ry="9"/><ellipse class="e" cx="535" cy="604" rx="12" ry="9"/><ellipse class="e" cx="566" cy="604" rx="12" ry="9"/><ellipse class="e" cx="597" cy="604" rx="12" ry="9"/>
 <polygon class="l" points="455,595 490,590 495,640 465,650"/>
 <path d="M440,430H640M440,420H630M460,500H640M495,540H620M500,560H640M540,560V590M570,560V590M600,560V590M560,620L545,680M515,450L520,490M445,380V430M490,400H555M490,415H555"/>
 <polygon class="d" points="1008,220 1130,195 1178,370 1170,382 1050,410 1035,380"/>
 <polygon class="l" points="1085,370 1128,365 1125,382 1085,388"/>
 <polygon class="w" points="1130,350 1140,350 1135,380 1128,380"/>
 <path d="M1015,235L1140,230M1050,255L1110,245L1150,370M1060,300L1125,285M1055,270L1115,260M1060,280L1115,270M1055,255L1085,385M1080,350L1130,340M1082,360L1135,350M1035,380L1080,370L1085,390M1148,378L1170,378"/>
 <polygon class="l" points="1195,695 1222,690 1224,676 1232,676 1234,686 1260,682 1258,697 1234,701 1234,705 1222,705 1222,702 1198,708"/>
 <circle class="k" cx="1230" cy="667" r="6"/>
 <polygon class="l" points="1338,606 1424,695 1416,702 1330,614"/>
 <polygon class="d" points="1325,670 1375,670 1430,690 1465,740 1490,780 1525,810 1515,870 1480,860 1430,920 1395,885 1330,830 1305,800 1300,760 1330,720 1305,695"/>
 <polygon class="l" points="1278,686 1384,800 1372,812 1268,695"/>
 <path d="M1340,720L1465,740M1350,700L1400,780L1350,790M1380,720A25,25 0 1 1 1430,740M1360,750L1490,800M1340,780L1440,870M1330,830L1350,790M1400,800L1380,870M1440,820L1470,860M1490,810L1480,860M1420,860L1430,920"/>
</g>
</svg>
</body></html>
